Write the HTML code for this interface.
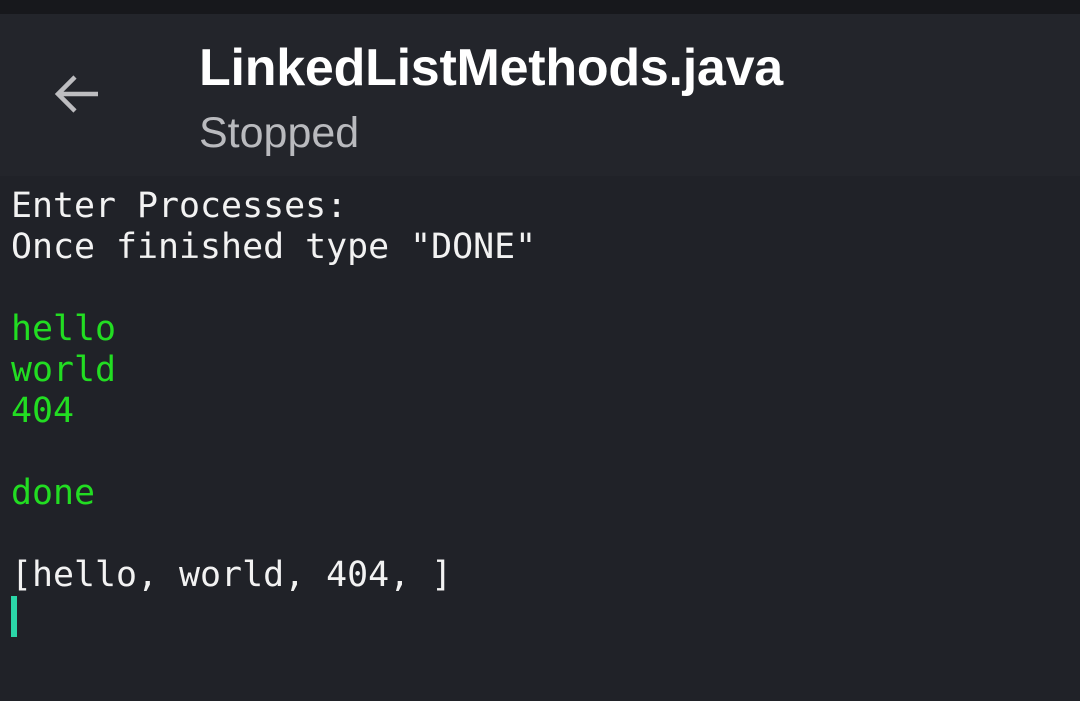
<!DOCTYPE html>
<html><head><style>
body{margin:0;width:1080px;height:701px;background:#202228;overflow:hidden;position:relative}
.top{position:absolute;left:0;top:0;width:1080px;height:14px;background:#17181c}
.hdr{position:absolute;left:0;top:14px;width:1080px;height:162px;background:#23252b}
.title{position:absolute;left:199px;top:24px;font:bold 52px "Liberation Sans",sans-serif;color:#fff;letter-spacing:-0.25px}
.sub{position:absolute;left:199px;top:95px;font:43px "Liberation Sans",sans-serif;color:#b9babe}
pre{position:absolute;left:11px;top:186px;margin:0;font:34.9px/41px "DejaVu Sans Mono",monospace;color:#f2f2f2}
.g{color:#22dd22}
.cur{position:absolute;left:11px;top:596px;width:6px;height:41px;background:#2bd6a8}
</style></head><body>
<div class="top"></div>
<div class="hdr">
<svg style="position:absolute;left:52px;top:58px" width="50" height="44" viewBox="0 0 50 44"><path d="M46 22H6M23 5L6 22L23 39" stroke="#bdbdc0" stroke-width="4.5" fill="none"/></svg>
<div class="title">LinkedListMethods.java</div>
<div class="sub">Stopped</div>
</div>
<pre>Enter Processes:
Once finished type "DONE"

<span class="g">hello
world
404

done</span>

[hello, world, 404, ]</pre>
<div class="cur"></div>
</body></html>
